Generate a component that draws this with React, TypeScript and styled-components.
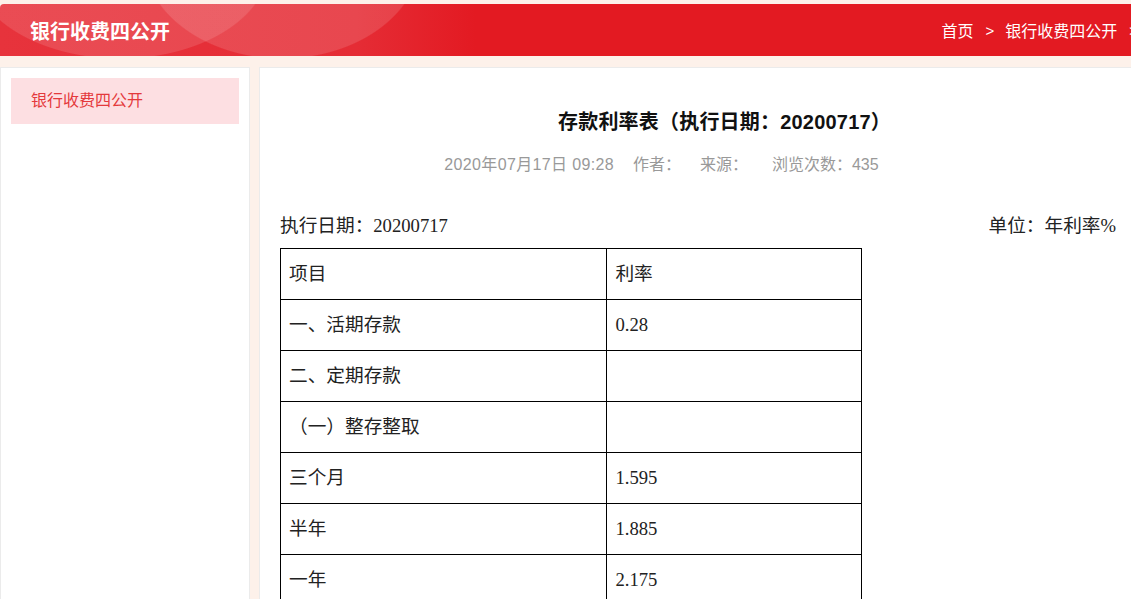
import * as React from 'react'
import styled, { createGlobalStyle } from 'styled-components'

const rows: Array<[string, string]> = [
  ['一、活期存款', '0.28'],
  ['二、定期存款', ''],
  ['（一）整存整取', ''],
  ['三个月', '1.595'],
  ['半年', '1.885'],
  ['一年', '2.175'],
  ['二年', '2.75'],
]

export default function App() {
  return (
    <Page>
      <GlobalStyle />
      <Header>
        <SiteTitle>银行收费四公开</SiteTitle>
        <Crumbs>
          <Crumb>首页</Crumb>
          <Sep>&gt;</Sep>
          <Crumb>银行收费四公开</Crumb>
          <Sep>&gt;</Sep>
          <Crumb>正文</Crumb>
        </Crumbs>
      </Header>

      <Main>
        <Sidebar>
          <NavItem active>银行收费四公开</NavItem>
        </Sidebar>

        <Article>
          <Title>存款利率表（执行日期：20200717）</Title>
          <Meta>
            <MetaItem gap={19} spacing={0.35}>2020年07月17日 09:28</MetaItem>
            <MetaItem gap={19}>作者：</MetaItem>
            <MetaItem gap={24}>来源：</MetaItem>
            <MetaItem gap={0}>浏览次数：435</MetaItem>
          </Meta>

          <InfoRow>
            <span>执行日期：20200717</span>
            <span>单位：年利率%</span>
          </InfoRow>

          <RateTable>
            <tbody>
              <tr>
                <NameCell>项目</NameCell>
                <RateCell>利率</RateCell>
              </tr>
              {rows.map(([name, rate]) => (
                <tr key={name}>
                  <NameCell>{name}</NameCell>
                  <RateCell>{rate}</RateCell>
                </tr>
              ))}
            </tbody>
          </RateTable>
        </Article>
      </Main>
    </Page>
  )
}

// styles
const GlobalStyle = createGlobalStyle`
  html, body {
    margin: 0;
    padding: 0;
    overflow: hidden;
    background: #fdf1ea;
  }
  * {
    box-sizing: border-box;
  }
`

const Page = styled.div`
  width: 1190px;
  min-height: 599px;
  padding-top: 4px;
  background: #fdf1ea;
  font-family: 'Liberation Sans', 'Noto Sans CJK SC', sans-serif;
`

const Header = styled.header`
  display: flex;
  align-items: center;
  height: 52px;
  padding: 0 9px 0 30px;
  border-top-left-radius: 4px;
  background:
    radial-gradient(ellipse 140px 105px at 282px -50px, rgba(255, 255, 255, 0.13) 99%, transparent 100%),
    radial-gradient(ellipse 150px 95px at 120px -40px, rgba(255, 255, 255, 0.12) 99%, transparent 100%),
    linear-gradient(90deg, #e7333c 0%, #e52c35 30%, #e31a22 40%, #e31a22 100%);
`

const SiteTitle = styled.h1`
  margin: 0;
  font-size: 20px;
  font-weight: 700;
  color: #fff;
`

const Crumbs = styled.nav`
  display: flex;
  align-items: center;
  margin-left: auto;
  font-size: 16px;
  color: #fff;
`

const Crumb = styled.span`
  white-space: nowrap;
`

const Sep = styled.span`
  margin: 0 11px 0 12px;
  font-size: 15px;
`

const Main = styled.div`
  display: flex;
  gap: 9px;
  margin-top: 11px;
  align-items: stretch;
`

const Sidebar = styled.aside`
  width: 250px;
  min-height: 532px;
  padding: 10px;
  background: #fff;
  border: 1px solid #ebebeb;
  border-bottom: none;
`

const NavItem = styled.div<{ active?: boolean }>`
  height: 46px;
  line-height: 46px;
  padding-left: 20px;
  font-size: 16px;
  color: ${(p) => (p.active ? '#e4393c' : '#333')};
  background: ${(p) => (p.active ? '#fddfe2' : 'transparent')};
`

const Article = styled.section`
  flex: 1;
  padding: 40px 20px 0;
  background: #fff;
  border: 1px solid #ebebeb;
  border-bottom: none;
`

const Title = styled.h2`
  margin: 0;
  height: 28px;
  line-height: 28px;
  text-align: center;
  font-size: 20px;
  font-weight: 700;
  letter-spacing: 0.2px;
  color: #111;
`

const Meta = styled.div`
  display: flex;
  justify-content: center;
  margin-top: 17px;
  padding-right: 126px;
  height: 24px;
  line-height: 24px;
  font-size: 16px;
  color: #999;
`

const MetaItem = styled.span<{ gap: number; spacing?: number }>`
  margin-right: ${(p) => p.gap}px;
  letter-spacing: ${(p) => p.spacing || 0}px;
  white-space: nowrap;
`

const InfoRow = styled.div`
  display: flex;
  justify-content: space-between;
  width: 836px;
  margin-top: 37px;
  height: 24px;
  line-height: 24px;
  font-family: 'Liberation Serif', 'Noto Sans CJK SC', serif;
  font-size: 18.67px;
  color: #222;
`

const RateTable = styled.table`
  margin-top: 10px;
  border-collapse: collapse;
  width: 582px;
  font-family: 'Liberation Serif', 'Noto Sans CJK SC', serif;
  font-size: 18.67px;
  color: #222;

  td {
    height: 51px;
    padding: 0 8px;
    border: 1px solid #000;
    vertical-align: middle;
    line-height: 24px;
  }
`

const NameCell = styled.td`
  width: 327px;
`

const RateCell = styled.td`
  width: 255px;
`
